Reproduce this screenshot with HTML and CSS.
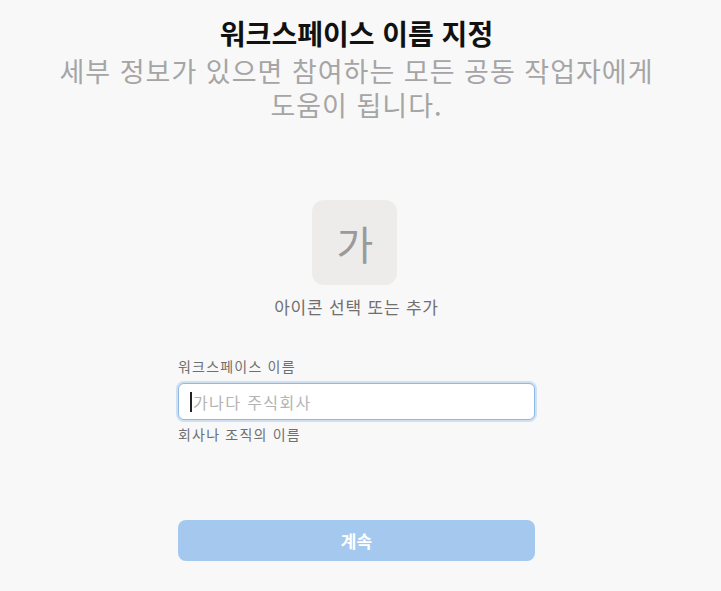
FILE: index.html
```html
<!DOCTYPE html>
<html lang="ko">
<head>
<meta charset="utf-8">
<link rel="stylesheet" href="styles.css">
</head>
<body>
<main class="page">
  <header class="head">
    <h1 class="title">워크스페이스 이름 지정</h1>
    <p class="subtitle">세부 정보가 있으면 참여하는 모든 공동 작업자에게 도움이 됩니다.</p>
  </header>
  <section class="icon-picker">
    <div class="icon-box">가</div>
    <div class="icon-caption">아이콘 선택 또는 추가</div>
  </section>
  <form class="form">
    <label class="label" for="ws">워크스페이스 이름</label>
    <div class="input-wrap">
      <span class="caret"></span>
      <input id="ws" class="input" type="text" placeholder="가나다 주식회사">
    </div>
    <div class="help">회사나 조직의 이름</div>
    <button class="btn" type="button">계속</button>
  </form>
</main>
</body>
</html>
```
FILE: styles.css
```css
* { box-sizing: border-box; }
html, body { margin: 0; padding: 0; }
body {
  background: #f8f8f8;
  font-family: "Noto Sans CJK KR", "Noto Sans", sans-serif;
  width: 713px;
  word-break: keep-all;
}
.page {
  display: flex;
  flex-direction: column;
  align-items: center;
  padding-top: 16px;
}
.head {
  display: flex;
  flex-direction: column;
  align-items: center;
  text-align: center;
  max-width: 625px;
}
.title {
  margin: 0;
  font-size: 28px;
  font-weight: 700;
  line-height: 34px;
  color: #111;
}
.subtitle {
  margin: 4px 0 0;
  font-size: 27px;
  letter-spacing: 1px;
  font-weight: 400;
  line-height: 34px;
  color: #a5a5a5;
}
.icon-picker {
  margin-top: 78px;
  display: flex;
  flex-direction: column;
  align-items: center;
}
.icon-box {
  width: 85px;
  height: 85px;
  margin-right: 3px;
  border-radius: 12px;
  background: #edecea;
  color: #9a9a9a;
  font-size: 40px;
  display: flex;
  align-items: center;
  justify-content: center;
}
.icon-caption {
  margin-top: 9px;
  font-size: 17px;
  letter-spacing: 0.8px;
  color: #6f6f6f;
  line-height: 26px;
}
.form {
  margin-top: 36px;
  width: 357px;
  display: flex;
  flex-direction: column;
}
.label {
  font-size: 14px;
  letter-spacing: 1.2px;
  color: #6f6f6f;
  line-height: 20px;
  margin-bottom: 7px;
}
.input-wrap {
  position: relative;
}
.input {
  width: 100%;
  height: 37px;
  border: 1px solid #8fb8e3;
  border-radius: 6px;
  background: #fff;
  box-shadow: 0 0 0 2px #cfe0f2;
  padding: 0 14px;
  font-family: inherit;
  font-size: 16px;
  letter-spacing: 1.4px;
  color: #333;
  outline: none;
}
.input::placeholder { color: #b3b3b3; }
.caret {
  position: absolute;
  left: 12px;
  top: 9px;
  width: 2px;
  height: 20px;
  background: #222;
}
.help {
  margin-top: 4px;
  font-size: 14px;
  letter-spacing: 1.2px;
  color: #6f6f6f;
  line-height: 20px;
}
.btn {
  margin-top: 76px;
  height: 41px;
  border: none;
  border-radius: 8px;
  background: #a4c8ee;
  color: #fff;
  font-family: inherit;
  font-size: 17px;
  font-weight: 700;
}
```
